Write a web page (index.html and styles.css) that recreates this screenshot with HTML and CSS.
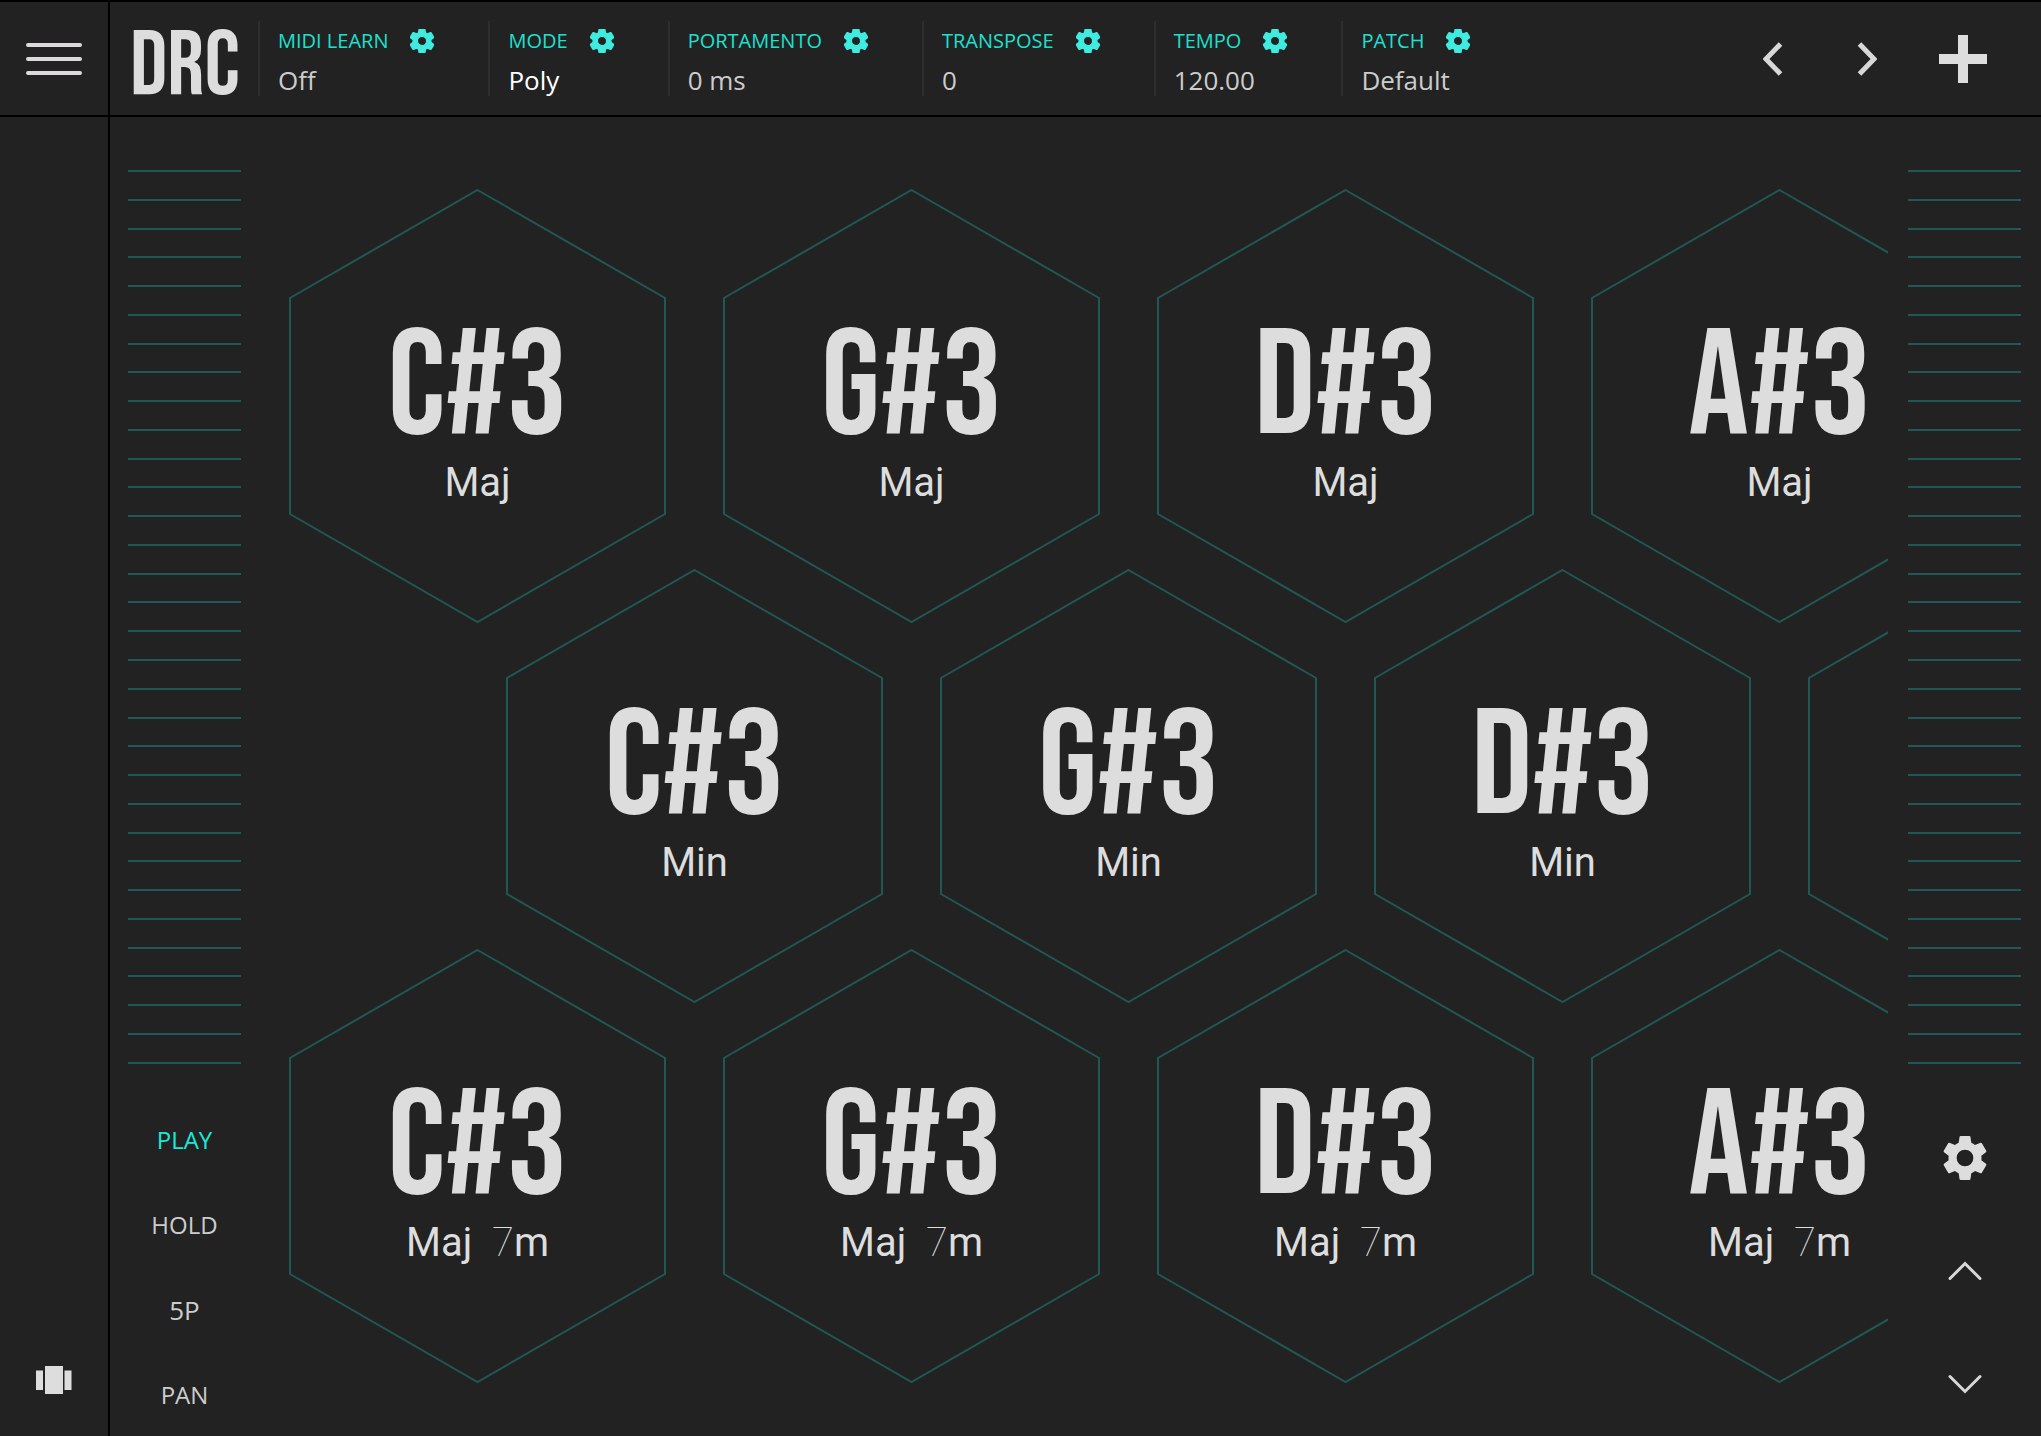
FILE: index.html
```html
<!DOCTYPE html>
<html lang="en">
<head>
<meta charset="utf-8">
<meta name="viewport" content="width=device-width, initial-scale=1">
<title>DRC</title>
<link rel="stylesheet" href="styles.css">
</head>
<body>
<svg class="defs" aria-hidden="true">
  <symbol id="gear" viewBox="2 2 20 20"><path d="M19.43 12.98c.04-.32.07-.64.07-.98s-.03-.66-.07-.98l2.11-1.65c.19-.15.24-.42.12-.64l-2-3.46c-.12-.22-.39-.3-.61-.22l-2.49 1c-.52-.4-1.08-.73-1.69-.98l-.38-2.65C14.46 2.18 14.25 2 14 2h-4c-.25 0-.46.18-.49.42l-.38 2.65c-.61.25-1.17.59-1.69.98l-2.49-1c-.23-.09-.49 0-.61.22l-2 3.46c-.13.22-.07.49.12.64l2.11 1.65c-.04.32-.07.65-.07.98s.03.66.07.98l-2.11 1.65c-.19.15-.24.42-.12.64l2 3.46c.12.22.39.3.61.22l2.49-1c.52.4 1.08.73 1.69.98l.38 2.65c.03.24.24.42.49.42h4c.25 0 .46-.18.49-.42l.38-2.65c.61-.25 1.17-.59 1.69-.98l2.49 1c.23.09.49 0 .61-.22l2-3.46c.12-.22.07-.49-.12-.64l-2.11-1.65zM12 15.8a3.8 3.8 0 1 1 0-7.6 3.8 3.8 0 0 1 0 7.6z"/></symbol>
  <symbol id="hex" viewBox="0 0 377 434"><path d="M188.5 1L376 109V325L188.5 433L1 325V109Z"/></symbol>
</svg>
<div class="app">
  <nav class="rail">
    <button class="menu" aria-label="Menu"><svg width="56" height="34" viewBox="0 0 56 34"><path d="M2 3H54M2 17H54M2 31H54"/></svg></button>
    <button class="panels" aria-label="Panels"><svg width="36" height="28" viewBox="0 0 36 28"><path d="M0 4.500H7V24H0ZM9 0H27V28H9ZM28.500 4.500H35.500V24H28.500Z"/></svg></button>
  </nav>
  <header class="bar">
    <h1 class="logo">DRC</h1>
    <button class="param"><span class="name">MIDI LEARN<svg class="cog"><use href="#gear"/></svg></span><span class="value">Off</span></button>
    <button class="param"><span class="name">MODE<svg class="cog"><use href="#gear"/></svg></span><span class="value strong">Poly</span></button>
    <button class="param"><span class="name">PORTAMENTO<svg class="cog"><use href="#gear"/></svg></span><span class="value">0 ms</span></button>
    <button class="param"><span class="name">TRANSPOSE<svg class="cog"><use href="#gear"/></svg></span><span class="value">0</span></button>
    <button class="param"><span class="name">TEMPO<svg class="cog"><use href="#gear"/></svg></span><span class="value">120.00</span></button>
    <button class="param"><span class="name">PATCH<svg class="cog"><use href="#gear"/></svg></span><span class="value">Default</span></button>
    <div class="actions">
      <button aria-label="Previous patch"><svg width="20" height="34" viewBox="0 0 20 34"><path class="line" d="M17.500 2L3 17L17.500 32"/></svg></button>
      <button aria-label="Next patch"><svg width="20" height="34" viewBox="0 0 20 34"><path class="line" d="M2.500 2L17 17L2.500 32"/></svg></button>
      <button aria-label="Add"><svg width="48" height="48" viewBox="0 0 48 48"><path class="fill" d="M19 0H29V19H48V29H29V48H19V29H0V19H19Z"/></svg></button>
    </div>
  </header>
  <main class="stage">
    <section class="side">
      <div class="ribbon"><i></i><i></i><i></i><i></i><i></i><i></i><i></i><i></i><i></i><i></i><i></i><i></i><i></i><i></i><i></i><i></i><i></i><i></i><i></i><i></i><i></i><i></i><i></i><i></i><i></i><i></i><i></i><i></i><i></i><i></i><i></i><i></i></div>
      <div class="modes">
        <button class="active">PLAY</button>
        <button>HOLD</button>
        <button class="count">5P</button>
        <button>PAN</button>
      </div>
    </section>
    <section class="pads">
      <div class="row">
        <button class="pad"><svg class="hex"><use href="#hex"/></svg><span class="chord"><span class="note">C#3</span><span class="kind">Maj</span></span></button>
        <button class="pad"><svg class="hex"><use href="#hex"/></svg><span class="chord"><span class="note">G#3</span><span class="kind">Maj</span></span></button>
        <button class="pad"><svg class="hex"><use href="#hex"/></svg><span class="chord"><span class="note">D#3</span><span class="kind">Maj</span></span></button>
        <button class="pad"><svg class="hex"><use href="#hex"/></svg><span class="chord"><span class="note">A#3</span><span class="kind">Maj</span></span></button>
      </div>
      <div class="row shifted">
        <button class="pad"><svg class="hex"><use href="#hex"/></svg><span class="chord"><span class="note">C#3</span><span class="kind">Min</span></span></button>
        <button class="pad"><svg class="hex"><use href="#hex"/></svg><span class="chord"><span class="note">G#3</span><span class="kind">Min</span></span></button>
        <button class="pad"><svg class="hex"><use href="#hex"/></svg><span class="chord"><span class="note">D#3</span><span class="kind">Min</span></span></button>
        <button class="pad" aria-label="Pad 4"><svg class="hex"><use href="#hex"/></svg></button>
      </div>
      <div class="row">
        <button class="pad"><svg class="hex"><use href="#hex"/></svg><span class="chord"><span class="note">C#3</span><span class="kind">Maj  <span class="thin">7</span>m</span></span></button>
        <button class="pad"><svg class="hex"><use href="#hex"/></svg><span class="chord"><span class="note">G#3</span><span class="kind">Maj  <span class="thin">7</span>m</span></span></button>
        <button class="pad"><svg class="hex"><use href="#hex"/></svg><span class="chord"><span class="note">D#3</span><span class="kind">Maj  <span class="thin">7</span>m</span></span></button>
        <button class="pad"><svg class="hex"><use href="#hex"/></svg><span class="chord"><span class="note">A#3</span><span class="kind">Maj  <span class="thin">7</span>m</span></span></button>
      </div>
    </section>
    <section class="side">
      <div class="ribbon"><i></i><i></i><i></i><i></i><i></i><i></i><i></i><i></i><i></i><i></i><i></i><i></i><i></i><i></i><i></i><i></i><i></i><i></i><i></i><i></i><i></i><i></i><i></i><i></i><i></i><i></i><i></i><i></i><i></i><i></i><i></i><i></i></div>
      <div class="tools">
        <button aria-label="Settings"><svg class="settings" width="44" height="46"><use href="#gear"/></svg></button>
        <button aria-label="Octave up"><svg width="34" height="20" viewBox="0 0 34 20"><path class="line slim" d="M2 17.500L17 2.500L32 17.500"/></svg></button>
        <button aria-label="Octave down"><svg width="34" height="20" viewBox="0 0 34 20"><path class="line slim" d="M2 2.500L17 17.500L32 2.500"/></svg></button>
      </div>
    </section>
  </main>
</div>
</body>
</html>
```
FILE: styles.css
```css
* { box-sizing: border-box; }

body {
  margin: 0;
  background: #222;
  color: #ddd;
  font-family: "Open Sans", "Noto Sans", sans-serif;
}

button {
  padding: 0;
  border: 0;
  background: none;
  color: inherit;
  font: inherit;
  cursor: pointer;
}

svg { display: block; }

.defs {
  position: absolute;
  width: 0;
  height: 0;
}

.app {
  display: grid;
  grid-template-columns: 110px minmax(0, 1fr);
  grid-template-rows: auto 1fr;
  min-height: 100vh;
  border-top: 2px solid #000;
}

/* Left rail */
.rail {
  grid-row: 1 / 3;
  display: flex;
  flex-direction: column;
  justify-content: space-between;
  border-right: 2px solid #000;
}

.menu,
.panels {
  display: flex;
  justify-content: center;
}

.menu {
  height: 115px;
  align-items: center;
  border-bottom: 2px solid #000;
}

.menu path {
  stroke: #dddadd;
  stroke-width: 4;
  stroke-linecap: round;
}

.panels { padding-bottom: 42px; }
.panels path { fill: #ddd; }

/* Top bar */
.bar {
  display: flex;
  align-items: center;
  height: 115px;
  padding-left: 20px;
  border-bottom: 2px solid #000;
}

.logo {
  width: 128px;
  margin: 0;
  padding-top: 16px;
  font: 400 92px/76px "Bebas Neue", "Roboto Condensed", sans-serif;
}

.param {
  display: flex;
  flex-direction: column;
  justify-content: center;
  height: 75px;
  padding: 6px 54px 0 18px;
  border-left: 2px solid #2e2e2e;
  text-align: left;
}

.name {
  display: flex;
  align-items: center;
  gap: 22px;
  color: #1ee0d0;
  font-size: 20px;
  line-height: 36px;
}

.cog {
  width: 24px;
  height: 24px;
  fill: #40ebe0;
  stroke: #40ebe0;
  stroke-width: 1;
}

.value {
  color: #ccc;
  font-size: 26px;
  line-height: 42px;
}

.value.strong { color: #fff; }

.actions {
  display: flex;
  align-items: center;
  margin-left: auto;
  padding-right: 54px;
}

.actions button { margin-left: 74px; }
.actions button:last-child { margin-left: 62px; }

.line {
  fill: none;
  stroke: #d8d8d8;
  stroke-width: 5;
}

.line.slim {
  stroke-width: 3;
  stroke-linecap: round;
}

.fill { fill: #ddd; }

/* Stage */
.stage {
  display: flex;
  padding: 0 20px 0 18px;
}

.side {
  display: flex;
  flex-direction: column;
  flex: none;
  width: 113px;
}

.ribbon {
  display: flex;
  flex: 1;
  flex-direction: column;
  justify-content: space-between;
  margin-top: 53px;
}

.ribbon i {
  height: 2px;
  background: #1f5854;
}

.modes,
.tools {
  display: grid;
  height: 372px;
}

.modes {
  grid-auto-rows: 85px;
  padding-top: 33px;
  font-size: 24px;
  color: #ccc;
}

.modes .active { color: #1be8d8; }
.modes .count { font-size: 26px; }

.tools {
  grid-auto-rows: 113px;
  padding-top: 37px;
}

.tools button {
  display: flex;
  align-items: center;
  justify-content: center;
}

.settings { fill: #ddd; }

.pads {
  flex: 1;
  min-width: 0;
  margin-right: 20px;
  padding: 72px 0 0 48px;
  overflow: hidden;
}

.row {
  display: flex;
  gap: 57px;
  margin-bottom: -54px;
}

.row:last-child { margin-bottom: 0; }
.shifted { padding-left: 217px; }

.pad {
  display: grid;
  flex: none;
  width: 377px;
  height: 434px;
}

.hex,
.chord { grid-area: 1 / 1; }

.hex {
  width: 377px;
  height: 434px;
  fill: none;
  stroke: #1f5854;
  stroke-width: 2;
}

.chord {
  display: flex;
  flex-direction: column;
  align-items: center;
  padding-top: 130px;
}

.note {
  font: 400 150px/140px "Bebas Neue", "Roboto Condensed", sans-serif;
}

.kind {
  font: 400 40px/48px Roboto, sans-serif;
  white-space: pre;
}

.thin { font-weight: 100; }
```
